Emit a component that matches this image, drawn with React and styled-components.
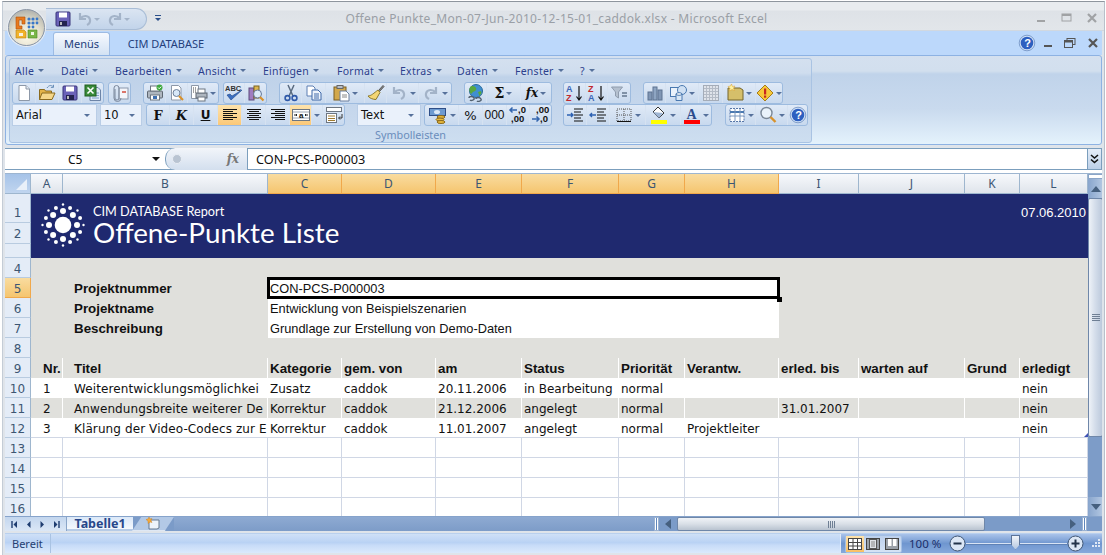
import React from "react";
import styled, { createGlobalStyle } from "styled-components";

const GlobalStyle = createGlobalStyle`
  html, body { margin: 0; padding: 0; background: #fff; }
  body { width: 1106px; height: 555px; overflow: hidden; font-family: "DejaVu Sans", sans-serif; }
  * { box-sizing: border-box; }
`;

const UI = `"Noto Sans", "DejaVu Sans", sans-serif`;
const TAHOMA = `"DejaVu Sans", "Noto Sans", sans-serif`;
const ARIAL = `"Liberation Sans", Arial, sans-serif`;

/* window frame */
const Win = styled.div`
  position: relative;
  width: 1103px;
  height: 554px;
  margin: 1px 0 0 2px;
  padding: 0 2px;
  background: #dfe4ea;
  border-top: 1px solid #8f969e;
  border-left: 1px solid #c4ccd6;
  border-right: 1px solid #b8c0ca;
  display: flex;
  flex-direction: column;
  overflow: hidden;
`;

const TitleBar = styled.div`
  height: 29px;
  flex: none;
  margin: 0 -2px;
  padding: 6px 0 0 0;
  display: grid;
  grid-template-columns: 1fr auto 1fr;
  background: linear-gradient(#e9ecef 0, #e9ecef 8px, #dee2e7 9px, #e2e6ea 100%);
  border-bottom: 1px solid #d1d8e0;
`;

const Qat = styled.div`
  width: 101px;
  height: 22px;
  margin-left: 43px;
  display: flex;
  align-items: center;
  padding-left: 8px;
  background: linear-gradient(#dbe5f2, #c2d4ea);
  border: 1px solid #a9bdd6;
  border-left: none;
  border-radius: 0 11px 11px 0;
  position: relative;
`;

const QatGap = styled.span`
  width: ${(p) => p.$w}px;
  flex: none;
`;

const QatMore = styled.div`
  position: absolute;
  left: 109px;
  top: 6px;
  width: 6px;
  border-top: 1px solid #2a4f8a;
  &::after {
    content: "";
    display: block;
    margin-top: 2px;
    border: 3px solid transparent;
    border-top: 3px solid #2a4f8a;
    border-bottom: none;
  }
`;

const WinTitle = styled.div`
  font: 12px ${UI};
  color: #9a9fa6;
  line-height: 22px;
  letter-spacing: 0.3px;
  padding-left: 6px;
  white-space: nowrap;
`;

const WinBtns = styled.div`
  display: flex;
  justify-content: flex-end;
  align-items: center;
  gap: 13px;
  padding: 0 6px 3px 0;
  opacity: 0.45;
`;

const OfficeBtn = styled.div`
  position: absolute;
  left: 5px;
  top: 7px;
  width: 37px;
  height: 37px;
  border-radius: 50%;
  z-index: 5;
  display: flex;
  align-items: center;
  justify-content: center;
  background: radial-gradient(circle at 50% 75%, #fbf8ea 0, #e4e0ce 45%, #c4c3b8 70%, #989ba3 100%);
  border: 1px solid #8a94a3;
  box-shadow: 0 0 0 1px #e9edf2;
`;

const TabRow = styled.div`
  height: 24px;
  flex: none;
  background: #bcd8fb;
  display: flex;
  align-items: flex-end;
  padding-left: 48px;
  position: relative;
`;

const Tab = styled.div`
  height: ${(p) => (p.$active ? "23px" : "22px")};
  width: ${(p) => p.$w}px;
  font: 11px/22px ${UI};
  color: #243f7c;
  text-align: center;
  border-radius: 3px 3px 0 0;
  ${(p) =>
    p.$active &&
    `background: linear-gradient(#f6f9fe, #d3e2f3);
     border: 1px solid #9dbbe3;
     border-bottom: none;`}
`;

const TabRight = styled.div`
  margin-left: auto;
  padding: 0 3px 3px 0;
  display: flex;
  align-items: center;
`;

const TabCtl = styled.span`
  display: block;
  margin-left: ${(p) => p.$ml}px;
`;

const Ribbon = styled.div`
  height: 90px;
  flex: none;
  padding: 2px 3px;
  background: linear-gradient(#d4e0ef 0, #d2dfee 15px, #c0d3ea 18px, #c9daee 60%, #e4f2fc 100%);
  border: 1px solid #8db2e3;
  border-radius: 3px;
`;

const RibbonGroup = styled.div`
  width: 803px;
  height: 85px;
  padding: 0 2px;
  border: 1px solid #a9c3e3;
  border-radius: 3px;
  background: linear-gradient(#d4e0ef 0, #cfddee 14px, #bfd2e9 18px, #c7d8ed 70%, #cddef0 100%);
`;

const MenuRow = styled.div`
  height: 23px;
  display: flex;
  align-items: center;
  padding-left: 3px;
`;

const MenuItem = styled.div`
  width: ${(p) => p.$w}px;
  flex: none;
  display: flex;
  align-items: center;
  gap: 4px;
  font: 10.5px ${UI};
  letter-spacing: 0.25px;
  color: #2c3f8c;
`;

const Caret = styled.span`
  display: inline-block;
  width: 0;
  height: 0;
  flex: none;
  border: ${(p) => p.$s || 3}px solid transparent;
  border-top: ${(p) => p.$s || 3}px solid ${(p) => p.$c || "#56719b"};
  border-bottom: none;
`;

const ToolRow = styled.div`
  height: 22px;
  display: flex;
`;

const Group = styled.div`
  display: flex;
  flex: none;
  height: 22px;
  margin-left: ${(p) => p.$ml || 0}px;
  border: 1px solid #9dbbdf;
  border-radius: 3px;
  background: linear-gradient(#e0eaf7, #c8d9ee);
`;

const Btn = styled.div`
  width: ${(p) => p.$w}px;
  flex: none;
  display: flex;
  align-items: center;
  justify-content: center;
  gap: 2px;
  border-right: 1px solid #d6e2f1;
  font: ${(p) => p.$font || `bold 13px "DejaVu Serif", serif`};
  color: #111;
  ${(p) => p.$on && `background: linear-gradient(#fde3ad, #fbc878);`}
  &:last-child { border-right: none; }
`;

const Combo = styled.div`
  width: ${(p) => p.$w}px;
  height: 22px;
  flex: none;
  margin-left: ${(p) => p.$ml || 0}px;
  padding: 0 6px 0 3px;
  display: flex;
  align-items: center;
  justify-content: space-between;
  border: 1px solid #b9cde6;
  background: #eaf1fb;
  font: 11.5px ${TAHOMA};
  color: #111;
`;

const GroupLabel = styled.div`
  height: 16px;
  text-align: center;
  font: 10.8px/17px ${UI};
  color: #6a8dbc;
`;

/* formula bar */
const FormulaBar = styled.div`
  margin-top: 3px;
  height: 22px;
  flex: none;
  display: flex;
  background: #fff;
  border-top: 1px solid #7b9ebd;
  border-bottom: 1px solid #7b9ebd;
`;

const NameBox = styled.div`
  width: 160px;
  flex: none;
  display: flex;
  align-items: center;
  padding: 0 5px 0 63px;
  justify-content: space-between;
  font: 12px ${UI};
  color: #111;
`;

const FxPill = styled.div`
  width: 83px;
  flex: none;
  position: relative;
  display: flex;
  align-items: center;
  justify-content: space-between;
  padding: 0 8px 0 5px;
  background: linear-gradient(#f2f5fa, #d3dfee);
  border-radius: 10px 0 0 10px;
  border: 1px solid #7b9ebd;
  border-width: 0 1px 0 1px;
  margin: -1px 0;
`;

const FxText = styled.span`
  font: italic bold 12px "DejaVu Serif", serif;
  color: #777;
`;

const FormulaInput = styled.div`
  flex: 1;
  padding-left: 8px;
  font: 12.7px/20px ${UI};
  color: #111;
`;

const ExpandBtn = styled.div`
  width: 15px;
  flex: none;
  margin: -1px 0;
  background: linear-gradient(#e4edf8, #bcd0e8);
  border: 1px solid #7b9ebd;
  display: flex;
  align-items: center;
  justify-content: center;
`;

const SheetGap = styled.div`
  height: 4px;
  flex: none;
  background: #fff;
  border-bottom: 1px solid #9db5d0;
`;

/* sheet */
const SheetWrap = styled.div`
  height: 342px;
  flex: none;
  display: flex;
  overflow: hidden;
`;

const Sheet = styled.div`
  display: grid;
  width: 1083px;
  flex: none;
  grid-template-columns: 26px 32px 205px 74px 94px 86px 97px 66px 94px 80px 106px 55px 68px;
  grid-template-rows: 20px 29px 21px 14px repeat(13, 20px);
  background: #fff;
`;

const Corner = styled.div`
  background: linear-gradient(#a6c3e8, #c0d5ef);
  border-right: 1px solid #9eb6ce;
  border-bottom: 1px solid #9eb6ce;
  position: relative;
  &::after {
    content: "";
    position: absolute;
    right: 3px;
    bottom: 3px;
    border-left: 11px solid transparent;
    border-bottom: 11px solid #e9f0f9;
  }
`;

const ColHead = styled.div`
  display: flex;
  align-items: center;
  justify-content: center;
  font: 12px ${UI};
  color: #3c5673;
  border-right: 1px solid ${(p) => (p.$on ? "#f0a84b" : "#9eb6ce")};
  border-bottom: 1px solid ${(p) => (p.$on ? "#f0a84b" : "#9eb6ce")};
  background: ${(p) =>
    p.$on
      ? "linear-gradient(#f9dca0, #f5c56f)"
      : "linear-gradient(#f7f9fc, #dfe4eb)"};
`;

const RowHead = styled.div`
  display: flex;
  align-items: flex-end;
  justify-content: center;
  padding-bottom: ${(p) => p.$pb ?? 1}px;
  font: 12px ${TAHOMA};
  color: #3c5673;
  border-right: 1px solid ${(p) => (p.$on ? "#f0a84b" : "#9eb6ce")};
  border-bottom: 1px solid ${(p) => (p.$on ? "#f0a84b" : "#b8cbe0")};
  background: ${(p) =>
    p.$on ? "linear-gradient(#f9dca0, #f5c56f)" : "#e4ecf7"};
`;

const Banner = styled.div`
  grid-column: 2 / -1;
  grid-row: 2 / 5;
  background: #1f296f;
  color: #fff;
  display: flex;
  padding: 9px 2px 0 10px;
`;

const BannerText = styled.div`
  margin-left: 8px;
  font-family: Lato, "Open Sans", sans-serif;
`;

const ReportLine = styled.div`
  font-size: 12.7px;
  line-height: 17px;
`;

const BigTitle = styled.div`
  font-size: 27.8px;
  line-height: 26px;
`;

const DateText = styled.div`
  margin-left: auto;
  margin-top: 2px;
  font: 13px ${ARIAL};
`;

const Cell = styled.div`
  grid-column: span ${(p) => p.$span || 1};
  display: flex;
  align-items: center;
  padding-left: ${(p) => p.$pad ?? 2}px;
  overflow: hidden;
  white-space: nowrap;
  background: ${(p) => p.$bg || "#e0e0dc"};
  color: #111;
  font: ${(p) => p.$font || `12px ${TAHOMA}`};
  letter-spacing: ${(p) => p.$ls || 0}px;
  ${(p) => p.$split && `border-right: 1px solid #fff;`}
  ${(p) => p.$grid && `border-right: 1px solid #d0d7e5;`}
  ${(p) => p.$under && `box-shadow: inset 0 -1px 0 #d0d7e5;`}
`;

const CellText = styled.span`
  display: block;
  padding-top: 1px;
`;

const Selected = styled(Cell)`
  position: relative;
  overflow: visible;
  z-index: 2;
  &::before {
    content: "";
    position: absolute;
    inset: -1px;
    border: 3px solid #000;
    pointer-events: none;
  }
  &::after {
    content: "";
    position: absolute;
    right: -3px;
    bottom: -4px;
    width: 5px;
    height: 5px;
    background: #000;
  }
`;

const ResizeMark = styled.div`
  position: absolute;
  right: 0;
  bottom: 1px;
  border-left: 4px solid transparent;
  border-bottom: 4px solid #3f51b5;
`;

const RelCell = styled(Cell)`
  position: relative;
`;

/* scrollbars */
const VScroll = styled.div`
  width: 15px;
  flex: none;
  display: flex;
  flex-direction: column;
  background: #7d9cc8;
`;

const SplitBox = styled.div`
  height: 5px;
  flex: none;
  background: #fff;
  border: 1px solid #8aa5c8;
`;

const ArrowBtn = styled.div`
  height: ${(p) => p.$h}px;
  flex: none;
  display: flex;
  align-items: center;
  justify-content: center;
  background: linear-gradient(90deg, #88a5cd, #b4c8e2);
`;

const TriUp = styled.span`
  border: 5px solid transparent;
  border-top: none;
  border-bottom: 6px solid #46607f;
`;

const TriDown = styled.span`
  border: 5px solid transparent;
  border-bottom: none;
  border-top: 6px solid #46607f;
`;

const VThumb = styled.div`
  height: 239px;
  flex: none;
  display: flex;
  align-items: center;
  justify-content: center;
  background: linear-gradient(90deg, #eef2f8, #d5deeb 45%, #bcc9dc);
  border: 1px solid #6f87a9;
  border-radius: 2px;
`;

const GripH = styled.div`
  width: 8px;
  height: 7px;
  background: repeating-linear-gradient(#6f7f94 0 1px, transparent 1px 2px);
`;

const VTrack = styled.div`
  flex: 1;
`;

const BottomBar = styled.div`
  height: 15px;
  flex: none;
  display: flex;
  align-items: stretch;
  background: #7b9bc8;
  border-top: 1px solid #86a3cb;
`;

const SheetNav = styled.div`
  width: 62px;
  flex: none;
  display: flex;
  align-items: center;
  justify-content: space-around;
  padding: 0 2px;
  background: linear-gradient(#c3d6ee, #dbe7f6);
  border-right: 1px solid #8aa5c8;
`;

const SheetTab = styled.div`
  width: 66px;
  flex: none;
  text-align: center;
  font: bold 12.5px/14px ${UI};
  color: #27478a;
  background: linear-gradient(#dbe8f8, #f4f8fd);
  border-bottom: 2px solid #b6cbe6;
`;

const NewTab = styled.div`
  width: 42px;
  flex: none;
  margin-left: -1px;
  display: flex;
  align-items: center;
  justify-content: center;
  background: #b3c9e6;
  border-bottom: 1px solid #dfe8f4;
  clip-path: polygon(22% 0, 100% 0, 78% 100%, 0 100%);
`;

const TabSpacer = styled.div`
  flex: 1;
  background: linear-gradient(#8eaad2, #7d9cc8);
`;

const SplitterH = styled.div`
  width: 5px;
  flex: none;
  background: #fff;
  border: 1px solid #9ab2d2;
  display: flex;
  justify-content: center;
  &::after {
    content: "";
    width: 1px;
    background: #5f86bc;
  }
`;

const HArrow = styled.div`
  width: 18px;
  flex: none;
  display: flex;
  align-items: center;
  justify-content: center;
`;

const TriLeft = styled.span`
  border: 5px solid transparent;
  border-left: none;
  border-right: 6px solid #46607f;
`;

const TriRight = styled.span`
  border: 5px solid transparent;
  border-right: none;
  border-left: 6px solid #46607f;
`;

const HThumb = styled.div`
  width: 308px;
  flex: none;
  display: flex;
  align-items: center;
  justify-content: center;
  background: linear-gradient(#f0f3f7, #d9dfe7 50%, #b9c3d0);
  border: 1px solid #6f87a9;
  border-radius: 2px;
`;

const GripV = styled.div`
  width: 7px;
  height: 7px;
  background: repeating-linear-gradient(90deg, #6f7f94 0 1px, transparent 1px 2px);
`;

const HTrack = styled.div`
  width: 79px;
  flex: none;
`;

const BarEnd = styled.span`
  width: 15px;
  flex: none;
`;

/* status bar */
const StatusBar = styled.div`
  height: 20px;
  flex: none;
  margin-top: 2px;
  display: flex;
  background: linear-gradient(#cfe0f7, #b9d2f4 45%, #c8dcf8 60%, #dbe9fc);
  border-top: 1px solid #b9d0ee;
`;

const StatusText = styled.div`
  width: 46px;
  flex: none;
  padding-left: 7px;
  font: 11px/19px ${UI};
  color: #253f72;
  border-right: 1px solid #a9c3e3;
`;

const StatusRight = styled.div`
  margin-left: auto;
  width: 262px;
  display: flex;
  align-items: center;
  padding-left: 4px;
  background: linear-gradient(#a9c3ea, #6f96cf 50%, #86a9dc);
  border-left: 1px solid #dfe9f7;
`;

const ViewBtns = styled.div`
  width: 57px;
  height: 18px;
  flex: none;
  display: flex;
  border: 1px solid #a3bfe4;
  border-radius: 2px;
  background: linear-gradient(#bcd0ed, #d5e3f5);
`;

const ViewBtn = styled.div`
  width: 19px;
  display: flex;
  align-items: center;
  justify-content: center;
  ${(p) => p.$on && `background: linear-gradient(#fde3ad, #f8bf63);`}
`;

const ZoomText = styled.div`
  width: 47px;
  flex: none;
  padding-left: 7px;
  font: 11.5px ${UI};
  color: #1b2f6b;
  white-space: nowrap;
`;

const ZoomTrack = styled.div`
  width: 101px;
  height: 14px;
  flex: none;
  position: relative;
  &::before {
    content: "";
    position: absolute;
    left: 0;
    right: 0;
    top: 6px;
    height: 1px;
    background: #d8e4f5;
    box-shadow: 0 1px 0 #5f82b6;
  }
`;

const ZoomKnob = styled.div`
  position: absolute;
  left: 45px;
  top: -2px;
  width: 9px;
  height: 15px;
  background: linear-gradient(#f0f4fa, #b7c8e0);
  border: 1px solid #5c7499;
  clip-path: polygon(0 0, 100% 0, 100% 65%, 50% 100%, 0 65%);
`;

const GripWrap = styled.span`
  margin-left: 8px;
`;

const SigmaMark = styled.span`
  font: bold 14px "DejaVu Serif", serif;
`;

const FxMarkText = styled.span`
  font: italic bold 12px "DejaVu Serif", serif;
`;

/* drawings */
const Svg = styled.svg`
  display: block;
  flex: none;
`;

const S = ({ w = 18, h = 18, vb, children }) => (
  <Svg width={w} height={h} viewBox={vb || `0 0 ${w} ${h}`}>
    {children}
  </Svg>
);

const Lines = ({ rows }) => (
  <S>
    {rows.map(([x, w], i) => (
      <rect key={i} x={x} y={3 + i * 2} width={w} height="1" fill="#111" />
    ))}
  </S>
);

const t = { fontFamily: `"Liberation Sans", sans-serif`, fontWeight: 700 };

const ICONS = {
  doc: (
    <S><path d="M4 1.5h7l3.5 3.5v11.5H4z" fill="#fff" stroke="#8d98a8" /><path d="M11 1.5V5h3.5" fill="#e6ebf2" stroke="#8d98a8" /></S>
  ),
  open: (
    <S><path d="M1.5 5.5h5l1 1.5h6v8.5h-12z" fill="#e3b348" stroke="#8a6a1f" /><path d="M4 9h13l-3 6.5H1.5z" fill="#f5d78a" stroke="#8a6a1f" /><path d="M9 4c2-3 4-3 6-1.5M15.5 0.8v2.6h-2.6" fill="none" stroke="#6a8fb9" /></S>
  ),
  save: (
    <S><rect x="2" y="2" width="14" height="14" rx="1" fill="#6a62b8" stroke="#39347a" /><rect x="5" y="2.5" width="8" height="5" fill="#fff" /><rect x="5" y="11" width="8" height="5" fill="#23234f" /><rect x="6" y="12" width="2" height="3" fill="#bbb" /></S>
  ),
  excel: (
    <S><path d="M6 3.5h8l2.5 2.5v10.5H6z" fill="#dfe9f6" stroke="#6d85a8" /><path d="M8 9h7M8 11.5h7M8 14h7" stroke="#7fa0c8" /><rect x="1" y="1" width="11" height="11" fill="#3a8b3a" stroke="#1f5e1f" /><path d="M3.5 3.5l6 6M9.5 3.5l-6 6" stroke="#fff" strokeWidth="1.6" /></S>
  ),
  mail: (
    <S><rect x="8" y="4" width="9" height="11" fill="#f3f5fa" stroke="#8b98ac" /><path d="M11 8h4" stroke="#d24a3a" strokeWidth="1.5" /><path d="M6 5v9a2 2 0 0 0 4 0V4a2.5 2.5 0 0 0-5 0v10a3.5 3.5 0 0 0 7 0" transform="translate(-2 0)" fill="none" stroke="#7b889c" /></S>
  ),
  print: (
    <S><rect x="1.5" y="7" width="15" height="7" rx="1" fill="#aeb6bf" stroke="#5e6772" /><rect x="4.5" y="2" width="9" height="5" fill="#fff" stroke="#6d7681" /><rect x="4.5" y="11" width="9" height="5" fill="#fff" stroke="#6d7681" /><rect x="7" y="12" width="4" height="3" fill="#3e6fb0" /><circle cx="13.5" cy="3.5" r="3" fill="#40a840" /><path d="M12 3.5l1.2 1.2 2-2" stroke="#fff" fill="none" /></S>
  ),
  preview: (
    <S><path d="M3.5 1.5h7l2.5 2.5v12H3.5z" fill="#fff" stroke="#8d98a8" /><circle cx="8.5" cy="9" r="3.5" fill="#d8e8f8" stroke="#6c7f99" /><path d="M11 12l4 4" stroke="#d8922c" strokeWidth="2.2" /></S>
  ),
  setup: (
    <S><path d="M1.5 1.5h7v13h-7z" fill="#fff" stroke="#8d98a8" /><path d="M3 4h3M3 6h3M3 8h3" stroke="#444" strokeDasharray="1 1" /><rect x="6" y="9" width="11" height="5" fill="#aeb6bf" stroke="#5e6772" /><rect x="8" y="5" width="7" height="4" fill="#fff" stroke="#6d7681" /><rect x="8" y="13" width="7" height="4" fill="#fff" stroke="#6d7681" /></S>
  ),
  spell: (
    <S w={20}><text x="1" y="7" fontSize="7.5" style={t} fill="#333">ABC</text><path d="M3 11l4 5L18 6l-10 6-2-2z" fill="#3b6fc0" stroke="#1d4488" strokeWidth="0.6" /></S>
  ),
  research: (
    <S><rect x="2" y="4" width="5" height="12" fill="#a07cc0" stroke="#5d4a7c" /><rect x="7" y="2" width="5" height="12" fill="#dcb64f" stroke="#7d6420" /><circle cx="10.5" cy="10" r="4" fill="#dbeaf8" stroke="#66799a" /><path d="M13 13l3.5 3.5" stroke="#d8922c" strokeWidth="2.2" /></S>
  ),
  cut: (
    <S><path d="M6 1l5 11M12 1L7 12" stroke="#5a6b80" strokeWidth="1.5" /><circle cx="5.5" cy="14" r="2.4" fill="none" stroke="#2f59a8" strokeWidth="1.6" /><circle cx="12.5" cy="14" r="2.4" fill="none" stroke="#2f59a8" strokeWidth="1.6" /></S>
  ),
  copy: (
    <S><path d="M2 2h6l2 2v8H2z" fill="#fff" stroke="#5c7fb4" /><path d="M7 6h6l3 3v7H7z" fill="#eef4fc" stroke="#3f68a8" /><path d="M9 10h5M9 12h5M9 14h5" stroke="#3f68a8" /></S>
  ),
  paste: (
    <S><rect x="2" y="3" width="12" height="13" fill="#d2a84c" stroke="#7a5d20" /><rect x="5" y="1.5" width="6" height="3" fill="#b8bec8" stroke="#666" /><path d="M8 7h6l3 3v7H8z" fill="#fff" stroke="#6a7f9e" /><path d="M10 11h5M10 13h5" stroke="#888" /></S>
  ),
  brush: (
    <S><path d="M11 7l5-5.5 1 1-5 5.5z" fill="#8c8c8c" stroke="#555" /><path d="M11 6l2 2.5-4 7c-3 0-7-1.5-8-3.5 3 0 6-3 10-6z" fill="#f3d674" stroke="#8c7a2c" /></S>
  ),
  undo: (
    <S><path d="M4 3v6h6M4.5 8.5C7 5 13 5 14 9.5c.5 2.5-1 4.5-3 5.5" fill="none" stroke="#a3b3c8" strokeWidth="2.2" /></S>
  ),
  redo: (
    <S><path d="M14 3v6H8M13.5 8.5C11 5 5 5 4 9.5c-.5 2.5 1 4.5 3 5.5" fill="none" stroke="#a3b3c8" strokeWidth="2.2" /></S>
  ),
  globe: (
    <S><circle cx="9" cy="7" r="6.5" fill="#3f8fd0" stroke="#2a6a9c" /><path d="M5 2c3 0 5 2 4 4s-3 1-4 3-2 0-2.5-2S3 2 5 2zM11 8l3-1 .5 2-2 3z" fill="#58a83e" /><path d="M2 14c0-2 4-2 5 0s-3 3-4 2M9 15c0-2 4-2 5 0s-3 3-4 2" fill="none" stroke="#51606f" strokeWidth="1.4" /></S>
  ),
  chart: (
    <S><rect x="2" y="8" width="4" height="8" fill="#8096b4" stroke="#5d7391" /><rect x="7" y="3" width="4" height="13" fill="#8ea5c2" stroke="#5d7391" /><rect x="12" y="6" width="4" height="10" fill="#8096b4" stroke="#5d7391" /></S>
  ),
  shapes: (
    <S><rect x="1.5" y="3.5" width="9" height="9" fill="#eaf2fb" stroke="#4a79b0" /><circle cx="13" cy="6" r="4.5" fill="#cfe0f3" stroke="#4a79b0" /><path d="M7 10h6v6.5H7z" fill="#d7e6f5" stroke="#4a79b0" /><ellipse cx="10" cy="10" rx="3" ry="1.3" fill="#fff" stroke="#4a79b0" /></S>
  ),
  grid: (
    <S><rect x="1.5" y="1.5" width="15" height="15" fill="#dfe3ea" stroke="#a4acb8" /><path d="M4.5 2v14M7.5 2v14M10.5 2v14M13.5 2v14M2 4.5h14M2 7.5h14M2 10.5h14M2 13.5h14" stroke="#b4bbc6" /></S>
  ),
  folder: (
    <S><path d="M2 4h12l3 2v10H2z" fill="#d5bf6a" stroke="#75652a" /><path d="M5.5 0l1 2.5L9 2 7.5 4l1 2.5L6 5.5 3.5 7 4 4.5 2 2.5l2.5-.5z" fill="#fff2a0" stroke="#d89a2c" strokeWidth="0.5" /></S>
  ),
  diamond: (
    <S><path d="M9 1l8 8-8 8-8-8z" fill="#f6c93a" stroke="#a87c18" /><rect x="8" y="4.5" width="2.2" height="6" fill="#c8281f" /><rect x="8" y="11.5" width="2.2" height="2.2" fill="#c8281f" /></S>
  ),
  merge: (
    <S w={20}><rect x="1.5" y="3.5" width="17" height="11" fill="#fff" stroke="#6d7681" /><path d="M2 6h16M2 12h16" stroke="#9aa4b2" /><path d="M3 9h3M5 8l1 1-1 1M14 9h3M15 8l-1 1 1 1" stroke="#222" fill="none" /><text x="8" y="11.5" fontSize="8" style={t} fill="#111">a</text></S>
  ),
  wrap: (
    <S w={20}><rect x="2.5" y="1.5" width="15" height="4" fill="#fff" stroke="#6d7681" /><rect x="2.5" y="7.5" width="10" height="9" fill="#fff" stroke="#6d7681" /><path d="M4 10h7M4 12.5h7M4 14.5h7" stroke="#a07b30" /><path d="M18 8v4h-3M16 10.5L14.5 12l1.5 1.5" fill="none" stroke="#333" /></S>
  ),
  money: (
    <S w={20}><rect x="1.5" y="2.5" width="16" height="7" fill="#6d9ad0" stroke="#2f4f88" /><ellipse cx="9" cy="6" rx="3" ry="2" fill="#dbe8f7" /><ellipse cx="13" cy="11" rx="4" ry="1.5" fill="#e9b93c" stroke="#8a6a1f" /><ellipse cx="12" cy="13.5" rx="4" ry="1.5" fill="#e9b93c" stroke="#8a6a1f" /><ellipse cx="13" cy="16" rx="4" ry="1.5" fill="#e9b93c" stroke="#8a6a1f" /></S>
  ),
  incdec: (
    <S w={21} h={20}><path d="M9 5H2M4.5 2.5L2 5l2.5 2.5" stroke="#3466ae" strokeWidth="1.5" fill="none" /><text x="10" y="8" fontSize="9.5" style={t} fill="#111">,0</text><text x="3" y="17" fontSize="9.5" style={t} fill="#111">,00</text></S>
  ),
  decdec: (
    <S w={21} h={20}><text x="6" y="8" fontSize="9.5" style={t} fill="#111">,00</text><path d="M2 14h7M6.5 11.5L9 14l-2.5 2.5" stroke="#3466ae" strokeWidth="1.5" fill="none" /><text x="10" y="17" fontSize="9.5" style={t} fill="#111">,0</text></S>
  ),
  indentL: (
    <S><path d="M1 9h6M5 7l2 2-2 2" stroke="#2d62b3" strokeWidth="1.4" fill="none" /><path d="M8 3h9M8 6h7M8 9h9M8 12h7M8 15h9" stroke="#111" /></S>
  ),
  indentR: (
    <S><path d="M7 9H1M3 7L1 9l2 2" stroke="#2d62b3" strokeWidth="1.4" fill="none" /><path d="M8 3h9M8 6h7M8 9h9M8 12h7M8 15h9" stroke="#111" /></S>
  ),
  border: (
    <S><rect x="2" y="3" width="14" height="12" fill="none" stroke="#555" strokeDasharray="1 1" /><path d="M9 3v12M2 9h14" stroke="#555" strokeDasharray="1 1" /><path d="M2 15.5h14" stroke="#111" /></S>
  ),
  fill: (
    <S><path d="M8 1l6 6-5 5-6-6z" fill="#fff" stroke="#333" /><path d="M3 6l10 1-4 5z" fill="#9fb6d4" /><rect x="1" y="14" width="16" height="4" fill="#ff0" /></S>
  ),
  font: (
    <S><text x="3.5" y="12.5" fontSize="14" fontFamily="Liberation Serif, serif" fontWeight="700" fill="#2c4b8c">A</text><rect x="1" y="14" width="16" height="4" fill="#f00" /></S>
  ),
  table: (
    <S><rect x="2" y="2.5" width="14" height="13" fill="#fff" stroke="#5877a8" strokeDasharray="2 1" /><path d="M2 6h14" stroke="#4a79b0" strokeWidth="2" /><path d="M7 3v12M12 3v12M2 10h14" stroke="#7b97bd" /></S>
  ),
  zoom: (
    <S><circle cx="7.5" cy="7" r="5.5" fill="#eaf3fb" stroke="#7a8898" strokeWidth="1.4" /><path d="M11.5 11l5 5" stroke="#d8922c" strokeWidth="2.4" /></S>
  ),
  help: (
    <S><circle cx="9" cy="9" r="7" fill="#2d5fc0" stroke="#cfe0f5" strokeWidth="1.4" /><circle cx="9" cy="9" r="7.8" fill="none" stroke="#4f73ae" strokeWidth="0.6" /><text x="6.3" y="13" fontSize="11" style={t} fill="#fff">?</text></S>
  ),
};

const SortIcon = ({ top, bottom }) => (
  <S w={19} h={18}>
    <text x="1" y="8" fontSize="9" style={t} fill={top === "Z" ? "#c0272d" : "#3b66b5"}>{top}</text>
    <text x="1" y="17" fontSize="9" style={t} fill={bottom === "Z" ? "#c0272d" : "#3b66b5"}>{bottom}</text>
    <path d="M14 2v13M11.5 12.5L14 16l2.5-3.5" fill="none" stroke="#111" strokeWidth="1.2" />
  </S>
);

const FilterIcon = () => (
  <S>
    <path d="M1.5 3h11l-4 5v6l-3-2V8z" fill="#b4c0cf" stroke="#8f9cae" />
    <path d="M12 9h5M12 12h5" stroke="#66788f" strokeWidth="1.5" />
  </S>
);

const Office = () => (
  <S w={25} h={25}>
    <path d="M2 2h9v7H8V5H5v6h3v3H2z" fill="#e87a1e" stroke="#b04f08" strokeWidth="0.6" />
    <path d="M2 15h8l2 2v6H2z" fill="#f1b32b" stroke="#b98010" strokeWidth="0.6" />
    <path d="M5 18h4v3H5z" fill="#f6efe0" />
    <path d="M14 15h9v8h-9z" fill="#7ab648" stroke="#4e8a20" strokeWidth="0.6" />
    <path d="M17 17h3v3h-3z" fill="#eff6e4" />
    <g fill="#3a78c8">
      <circle cx="15" cy="4" r="1.6" /><circle cx="19" cy="4" r="1.6" /><circle cx="23" cy="4" r="1.4" />
      <circle cx="15" cy="8" r="1.6" /><circle cx="19" cy="8" r="1.6" /><circle cx="23" cy="8" r="1.4" />
      <circle cx="15" cy="12" r="1.4" /><circle cx="19" cy="12" r="1.4" />
    </g>
  </S>
);

const Sun = () => {
  const ring = (n, d, r, off = 0) =>
    Array.from({ length: n }, (_, i) => {
      const a = off + (i * Math.PI * 2) / n;
      return <circle key={`${d}-${i}`} cx={22 + d * Math.cos(a)} cy={22 + d * Math.sin(a)} r={r} fill="#fff" />;
    });
  return (
    <S w={44} h={44}>
      <circle cx="22" cy="22" r="8.3" fill="#fff" />
      {ring(8, 14, 3)}
      {ring(8, 18.5, 2, Math.PI / 8)}
      {ring(8, 20.5, 1.2)}
    </S>
  );
};

const MinIcon = ({ c }) => <S w={14} h={10}><rect x="3" y="7" width="8" height="2" fill={c} /></S>;
const MaxIcon = ({ c }) => <S w={12} h={10}><rect x="1" y="1" width="9" height="7" fill="none" stroke={c} /><rect x="1" y="1" width="9" height="2" fill={c} /></S>;
const CloseIcon = ({ c }) => <S w={12} h={10}><path d="M2 1l8 8M10 1L2 9" stroke={c} strokeWidth="2.2" /></S>;
const RestoreIcon = ({ c }) => <S w={12} h={10}><rect x="3" y="0.5" width="8" height="6" fill="none" stroke={c} /><rect x="0.5" y="2.5" width="8" height="7" fill="#bcd8fb" stroke={c} /><rect x="0.5" y="2.5" width="8" height="2" fill={c} /></S>;

const NavArrows = () => (
  <>
    <S w={7} h={9}><path d="M1 1v7" stroke="#1f3d70" strokeWidth="1.4" /><path d="M6 1L2.5 4.5 6 8z" fill="#1f3d70" /></S>
    <S w={5} h={9}><path d="M4.5 1L1 4.5 4.5 8z" fill="#1f3d70" /></S>
    <S w={5} h={9}><path d="M.5 1L4 4.5.5 8z" fill="#1f3d70" /></S>
    <S w={7} h={9}><path d="M6 1v7" stroke="#1f3d70" strokeWidth="1.4" /><path d="M1 1l3.5 3.5L1 8z" fill="#1f3d70" /></S>
  </>
);

const NewSheetIcon = () => (
  <S w={16} h={13}>
    <path d="M4 3h10v8l-2 1H4z" fill="#eef3fa" stroke="#67788f" />
    <path d="M4 0l1 2 2-.5L6 3.5l1 2-2-.5-2 1.5V4L1 2.5l2-.5z" fill="#f3a93c" stroke="#c5791a" strokeWidth="0.4" />
  </S>
);

const ViewNormal = () => (
  <S w={14} h={12}><rect x="0.5" y="0.5" width="13" height="11" fill="#fff" stroke="#444" /><path d="M0 4.5h14M0 8h14M5 0v12M9.5 0v12" stroke="#444" /></S>
);
const ViewPage = () => (
  <S w={14} h={12}><rect x="0.5" y="0.5" width="13" height="11" fill="#9aa0a8" stroke="#444" /><rect x="3.5" y="1.5" width="7" height="9" fill="#dfe3e8" stroke="#555" /><path d="M5 4h4M5 6h4M5 8h4" stroke="#888" /></S>
);
const ViewBreak = () => (
  <S w={14} h={12}><rect x="0.5" y="0.5" width="13" height="11" fill="#9aa0a8" stroke="#444" /><rect x="3" y="1" width="3.5" height="7" fill="#fff" /><rect x="8" y="1" width="3.5" height="7" fill="#fff" /></S>
);

const RoundBtn = ({ plus }) => (
  <S w={17} h={17}>
    <circle cx="8.5" cy="8.5" r="7.5" fill="#dbe6f5" stroke="#3f5675" />
    <rect x="4.5" y="7.5" width="8" height="2" fill="#22324a" />
    {plus && <rect x="7.5" y="4.5" width="2" height="8" fill="#22324a" />}
  </S>
);

const Grip = () => (
  <S w={9} h={9}>
    <g fill="#dfe8f5">
      <rect x="6" y="0" width="2" height="2" /><rect x="3" y="3" width="2" height="2" /><rect x="6" y="3" width="2" height="2" />
      <rect x="0" y="6" width="2" height="2" /><rect x="3" y="6" width="2" height="2" /><rect x="6" y="6" width="2" height="2" />
    </g>
  </S>
);

const MENU = [
  ["Alle", 46], ["Datei", 54], ["Bearbeiten", 83], ["Ansicht", 65], ["Einfügen", 74],
  ["Format", 63], ["Extras", 57], ["Daten", 58], ["Fenster", 65], ["?", 30],
];

const TOOLS_TOP = [
  { ml: 0, items: [["doc", 23], ["open", 23], ["save", 23], ["excel", 21]] },
  { ml: 4, items: [["mail", 21]] },
  { ml: 12, items: [["print", 22], ["preview", 22], ["setup", 30, true]] },
  { ml: 4, items: [["spell", 21], ["research", 21]] },
  { ml: 12, items: [["cut", 22], ["copy", 24], ["paste", 39, true], ["brush", 22], ["undo", 32, true], ["redo", 32, true]] },
  { ml: 12, items: [["globe", 22], [<SigmaMark key="s">Σ</SigmaMark>, 34, true], [<FxMarkText key="f">fx</FxMarkText>, 30, true]] },
  { ml: 11, items: [[<SortIcon key="a" top="A" bottom="Z" />, 22], [<SortIcon key="z" top="Z" bottom="A" />, 22], [<FilterIcon key="fl" />, 22]] },
  { ml: 12, items: [["chart", 22], ["shapes", 33, true], ["grid", 24], ["folder", 33, true], ["diamond", 26, true]] },
];

const COLS = ["A", "B", "C", "D", "E", "F", "G", "H", "I", "J", "K", "L"];
const ON_COLS = ["C", "D", "E", "F", "G", "H"];

const HEADS = ["Nr.", "Titel", "Kategorie", "gem. von", "am", "Status", "Priorität", "Verantw.", "erled. bis", "warten auf", "Grund", "erledigt"];

const DATA = [
  ["1", "Weiterentwicklungsmöglichkei", "Zusatz", "caddok", "20.11.2006", "in Bearbeitung", "normal", "", "", "", "", "nein"],
  ["2", "Anwendungsbreite weiterer De", "Korrektur", "caddok", "21.12.2006", "angelegt", "normal", "", "31.01.2007", "", "", "nein"],
  ["3", "Klärung der Video-Codecs zur E", "Korrektur", "caddok", "11.01.2007", "angelegt", "normal", "Projektleiter", "", "", "", "nein"],
];

const padFor = (i) => (i === 0 ? 12 : i === 1 ? 11 : 2);
const boldFont = `bold 13.33px "Liberation Sans", sans-serif`;
const arialFont = `12.8px "Liberation Sans", sans-serif`;

const Tool = ({ icon, w, caret, on }) => (
  <Btn $w={w} $on={on}>
    {typeof icon === "string" ? ICONS[icon] : icon}
    {caret && <Caret />}
  </Btn>
);

const TextTool = ({ w, children, font, caret, on }) => (
  <Btn $w={w} $font={font} $on={on}>
    {children}
    {caret && <Caret />}
  </Btn>
);

const MetaRow = ({ label, children }) => (
  <>
    <Cell $span={1} />
    <Cell $pad={11} $font={boldFont}>{label}</Cell>
    {children}
    <Cell $span={4} />
  </>
);

export default function App() {
  return (
    <>
      <GlobalStyle />
      <Win>
        <OfficeBtn><Office /></OfficeBtn>
        <TitleBar>
          <Qat>
            {ICONS.save}
            <QatGap $w={4} />
            {ICONS.undo}
            <Caret $c="#a3b3c8" />
            <QatGap $w={6} />
            {ICONS.redo}
            <Caret $c="#a3b3c8" />
            <QatMore />
          </Qat>
          <WinTitle>Offene Punkte_Mon-07-Jun-2010-12-15-01_caddok.xlsx - Microsoft Excel</WinTitle>
          <WinBtns>
            <MinIcon c="#555" />
            <MaxIcon c="#555" />
            <CloseIcon c="#555" />
          </WinBtns>
        </TitleBar>
        <TabRow>
          <Tab $active $w={57}>Menüs</Tab>
          <Tab $w={112}>CIM DATABASE</Tab>
          <TabRight>
            {ICONS.help}
            <TabCtl $ml={5}><MinIcon c="#555" /></TabCtl>
            <TabCtl $ml={9}><RestoreIcon c="#555" /></TabCtl>
            <TabCtl $ml={11}><CloseIcon c="#555" /></TabCtl>
          </TabRight>
        </TabRow>
        <Ribbon>
          <RibbonGroup>
            <MenuRow>
              {MENU.map(([name, w]) => (
                <MenuItem key={name} $w={w}>
                  {name}
                  <Caret />
                </MenuItem>
              ))}
            </MenuRow>
            <ToolRow>
              {TOOLS_TOP.map((g, i) => (
                <Group key={i} $ml={g.ml}>
                  {g.items.map(([icon, w, caret], j) => (
                    <Tool key={j} icon={icon} w={w} caret={caret} />
                  ))}
                </Group>
              ))}
            </ToolRow>
            <ToolRow>
              <Combo $w={85}>Arial<Caret /></Combo>
              <Combo $w={42} $ml={3}>10<Caret /></Combo>
              <Group $ml={4}>
                <TextTool w={23}>F</TextTool>
                <TextTool w={24} font={`italic bold 13px "DejaVu Serif", serif`}>K</TextTool>
                <TextTool w={24} font={`bold 12px "DejaVu Sans", sans-serif`}><u>U</u></TextTool>
                <Btn $w={24} $on><Lines rows={[[2, 14], [2, 10], [2, 14], [2, 10], [2, 14], [2, 10]]} /></Btn>
                <Btn $w={24}><Lines rows={[[2, 14], [4, 10], [2, 14], [4, 10], [2, 14], [4, 10]]} /></Btn>
                <Btn $w={24}><Lines rows={[[2, 14], [6, 10], [2, 14], [6, 10], [2, 14], [6, 10]]} /></Btn>
                <Tool icon="merge" w={22} on />
                <Btn $w={11}><Caret /></Btn>
                <Tool icon="wrap" w={21} />
              </Group>
              <Combo $w={64} $ml={12}>Text<Caret /></Combo>
              <Group $ml={3}>
                <Tool icon="money" w={34} caret />
                <TextTool w={24} font={`13px "DejaVu Sans", sans-serif`}>%</TextTool>
                <TextTool w={24} font={`12px "Liberation Sans Narrow", "Liberation Sans", sans-serif`}>000</TextTool>
                <Tool icon="incdec" w={23} />
                <Tool icon="decdec" w={21} />
              </Group>
              <Group $ml={11}>
                <Tool icon="indentL" w={23} />
                <Tool icon="indentR" w={23} />
                <Tool icon="border" w={36} caret />
                <Tool icon="fill" w={35} caret />
                <Tool icon="font" w={30} caret />
              </Group>
              <Group $ml={13}>
                <Tool icon="table" w={30} caret />
                <Tool icon="zoom" w={32} caret />
                <Tool icon="help" w={19} />
              </Group>
            </ToolRow>
            <GroupLabel>Symbolleisten</GroupLabel>
          </RibbonGroup>
        </Ribbon>
        <FormulaBar>
          <NameBox>C5<Caret $c="#111" $s={4} /></NameBox>
          <FxPill>
            <S w={12} h={12}><circle cx="6" cy="6" r="4.5" fill="#b9c4d2" stroke="#e8edf4" /></S>
            <FxText>fx</FxText>
          </FxPill>
          <FormulaInput>CON-PCS-P000003</FormulaInput>
          <ExpandBtn>
            <S w={9} h={10}><path d="M1 1l3.5 3L8 1M1 5.5l3.5 3L8 5.5" fill="none" stroke="#111" strokeWidth="1.6" /></S>
          </ExpandBtn>
        </FormulaBar>
        <SheetGap />
        <SheetWrap>
          <Sheet>
            <Corner />
            {COLS.map((c) => (
              <ColHead key={c} $on={ON_COLS.includes(c)}>{c}</ColHead>
            ))}

            <Banner>
              <Sun />
              <BannerText>
                <ReportLine>CIM DATABASE Report</ReportLine>
                <BigTitle>Offene-Punkte Liste</BigTitle>
              </BannerText>
              <DateText>07.06.2010</DateText>
            </Banner>
            <RowHead $pb={2}>1</RowHead>
            <RowHead $pb={2}>2</RowHead>
            <RowHead />

            <RowHead>4</RowHead>
            <Cell $span={12} />

            <RowHead $on>5</RowHead>
            <MetaRow label="Projektnummer">
              <Selected $span={6} $bg="#fff" $font={arialFont}><CellText>CON-PCS-P000003</CellText></Selected>
            </MetaRow>

            <RowHead>6</RowHead>
            <MetaRow label="Projektname">
              <Cell $span={6} $bg="#fff" $font={arialFont}><CellText>Entwicklung von Beispielszenarien</CellText></Cell>
            </MetaRow>

            <RowHead>7</RowHead>
            <MetaRow label="Beschreibung">
              <Cell $span={6} $bg="#fff" $font={arialFont}><CellText>Grundlage zur Erstellung von Demo-Daten</CellText></Cell>
            </MetaRow>

            <RowHead>8</RowHead>
            <Cell $span={12} />

            <RowHead>9</RowHead>
            {HEADS.map((h, i) => (
              <Cell key={h} $pad={padFor(i)} $font={boldFont} $split={i < 11}>{h}</Cell>
            ))}

            {DATA.map((row, r) => (
              <React.Fragment key={row[0]}>
                <RowHead>{10 + r}</RowHead>
                {row.map((v, i) => {
                  const stripe = r === 1;
                  const bg = stripe ? "#e0e0dc" : "#fff";
                  if (r === 2 && i === 11) {
                    return (
                      <RelCell key={i} $pad={2} $bg={bg} $under>
                        <CellText>{v}</CellText>
                        <ResizeMark />
                      </RelCell>
                    );
                  }
                  return (
                    <Cell key={i} $pad={padFor(i)} $bg={bg} $ls={i === 1 ? 0.1 : 0} $split={stripe && i < 11} $under={r === 2}>
                      <CellText>{v}</CellText>
                    </Cell>
                  );
                })}
              </React.Fragment>
            ))}

            {[13, 14, 15, 16].map((n) => (
              <React.Fragment key={n}>
                <RowHead>{n}</RowHead>
                {COLS.map((c) => (
                  <Cell key={c} $bg="#fff" $grid $under />
                ))}
              </React.Fragment>
            ))}
          </Sheet>
          <VScroll>
            <SplitBox />
            <ArrowBtn $h={19}><TriUp /></ArrowBtn>
            <VThumb><GripH /></VThumb>
            <VTrack />
            <ArrowBtn $h={19}><TriDown /></ArrowBtn>
          </VScroll>
        </SheetWrap>
        <BottomBar>
          <SheetNav><NavArrows /></SheetNav>
          <SheetTab>Tabelle1</SheetTab>
          <NewTab><NewSheetIcon /></NewTab>
          <TabSpacer />
          <SplitterH />
          <HArrow><TriLeft /></HArrow>
          <HThumb><GripV /></HThumb>
          <HTrack />
          <HArrow><TriRight /></HArrow>
          <SplitterH />
          <BarEnd />
        </BottomBar>
        <StatusBar>
          <StatusText>Bereit</StatusText>
          <StatusRight>
            <ViewBtns>
              <ViewBtn $on><ViewNormal /></ViewBtn>
              <ViewBtn><ViewPage /></ViewBtn>
              <ViewBtn><ViewBreak /></ViewBtn>
            </ViewBtns>
            <ZoomText>100 %</ZoomText>
            <RoundBtn />
            <ZoomTrack><ZoomKnob /></ZoomTrack>
            <RoundBtn plus />
            <GripWrap><Grip /></GripWrap>
          </StatusRight>
        </StatusBar>
      </Win>
    </>
  );
}
